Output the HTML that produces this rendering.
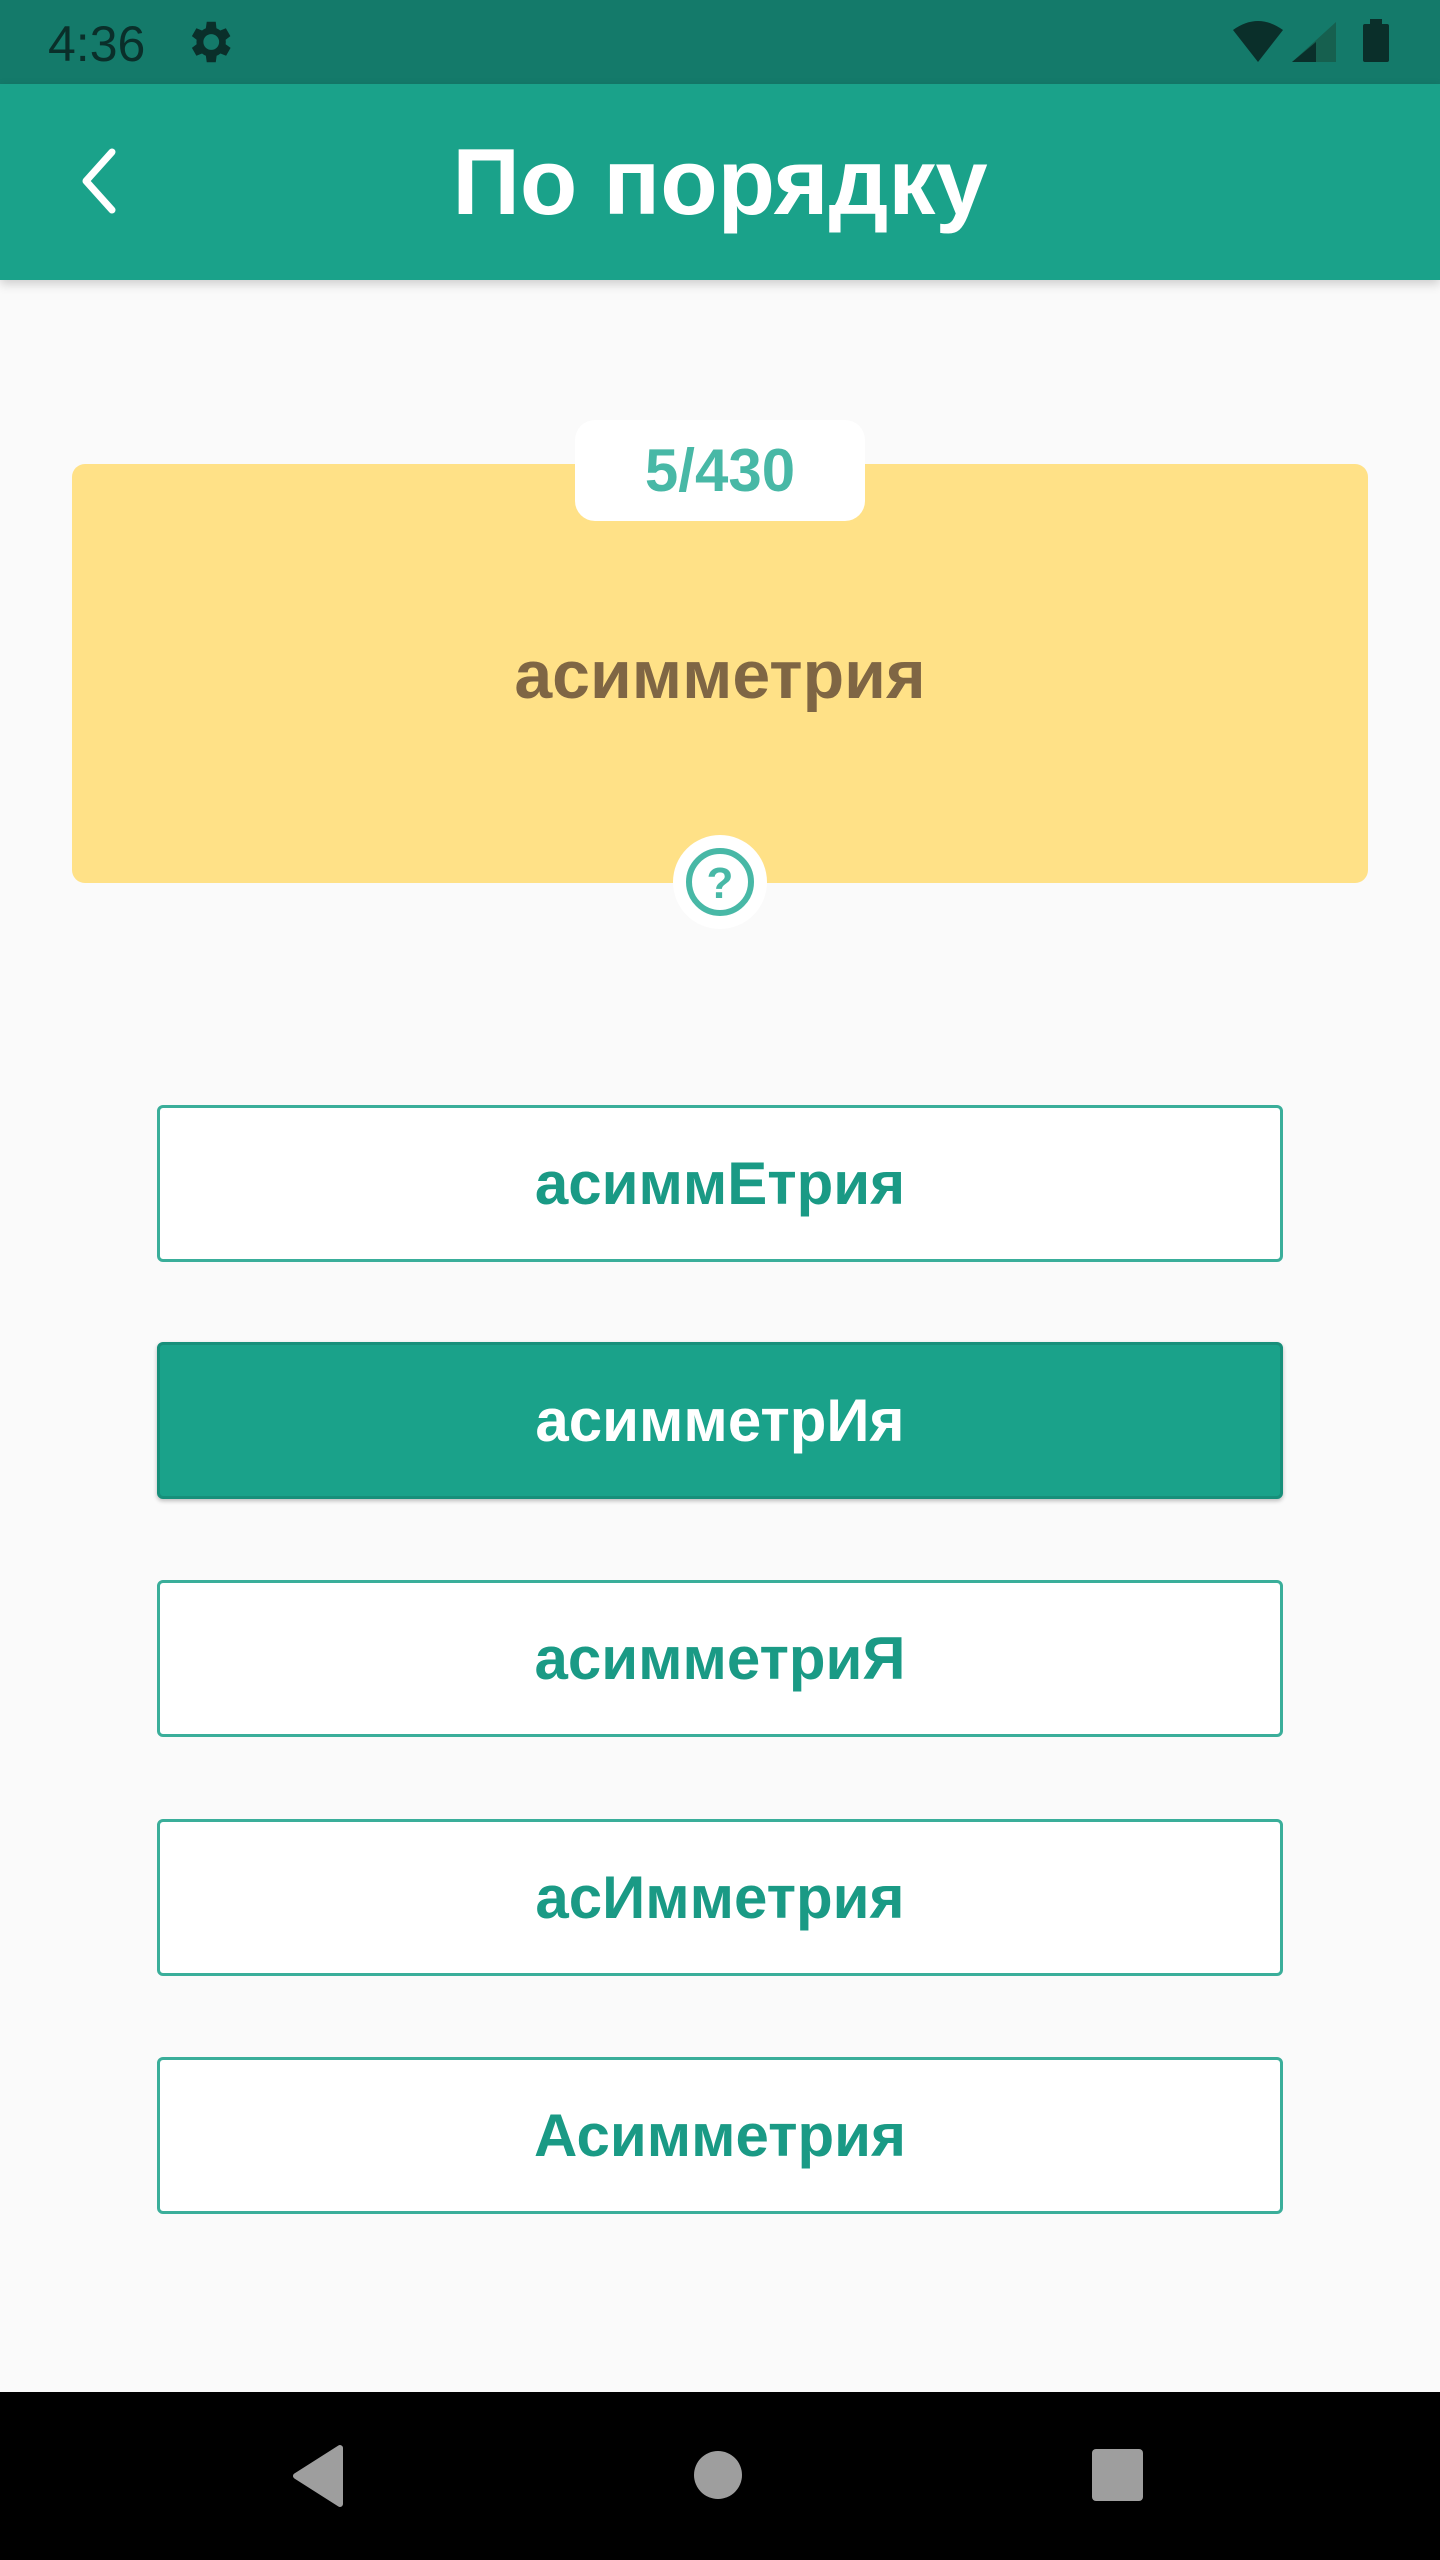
<!DOCTYPE html>
<html><head><meta charset="utf-8"><style>
*{margin:0;padding:0;box-sizing:border-box}
body{width:1440px;height:2560px;background:#fafafa;position:relative;overflow:hidden;font-family:"Liberation Sans",sans-serif}
.sb{position:absolute;left:0;top:0;width:1440px;height:84px;background:#147a6a}
.ab{position:absolute;left:0;top:84px;width:1440px;height:196px;background:#1aa28a;box-shadow:0 4px 10px rgba(0,0,0,.18)}
.title{position:absolute;left:0;width:1440px;top:84px;height:196px;line-height:196px;text-align:center;color:#fff;font-weight:bold;font-size:94px}
.card{position:absolute;left:72px;top:464px;width:1296px;height:419px;background:#ffe187;border-radius:13px}
.badge{position:absolute;left:575px;top:420px;width:290px;height:101px;background:#fff;border-radius:20px;text-align:center;line-height:101px;color:#48b8a6;font-weight:bold;font-size:60px}
.word{position:absolute;left:0;width:1440px;top:620px;text-align:center;color:#7f6644;font-weight:bold;font-size:68px;line-height:110px}
.btn{position:absolute;left:157px;width:1126px;height:157px;border:3px solid #3aae9a;border-radius:6px;background:#fff;color:#1a9a85;font-weight:bold;font-size:60px;text-align:center;line-height:151px}
.sel{background:#1aa28a;color:#fff;border-color:#178f7a;box-shadow:0 2px 4px rgba(0,0,0,.25)}
.nav{position:absolute;left:0;top:2392px;width:1440px;height:168px;background:#000}
</style></head><body>
<div class="sb"></div>
<div style="position:absolute;left:48px;top:14px;font-size:50px;color:#0a2f2a;line-height:60px">4:36</div>
<svg style="position:absolute;left:182px;top:15px" width="54" height="54" viewBox="0 0 24 24"><path fill="#0a2f2a" d="M19.4 13a7.5 7.5 0 0 0 0-2l2.1-1.6-2-3.5-2.5 1a7 7 0 0 0-1.7-1L15 3h-4l-.4 2.9a7 7 0 0 0-1.7 1l-2.5-1-2 3.5L6.5 11a7.5 7.5 0 0 0 0 2l-2.1 1.6 2 3.5 2.5-1a7 7 0 0 0 1.7 1L11 21h4l.4-2.9a7 7 0 0 0 1.7-1l2.5 1 2-3.5zM13 15.5a3.5 3.5 0 1 1 0-7 3.5 3.5 0 0 1 0 7z"/></svg>
<svg style="position:absolute;left:1230px;top:18px" width="170" height="48" viewBox="0 0 170 48">
<path d="M3 12 Q28 -6 53 12 L28 44 Z" fill="#0a2f2a"/>
<path d="M106 4 L106 44 L62 44 Z" fill="#16604f"/>
<path d="M86 24 L86 44 L62 44 Z" fill="#0a2f2a"/>
<rect x="133" y="6" width="26" height="38" rx="2" fill="#0a2f2a"/><rect x="140" y="1" width="12" height="6" fill="#0a2f2a"/>
</svg>
<div class="ab"></div>
<svg style="position:absolute;left:74px;top:146px" width="50" height="70" viewBox="0 0 50 70"><path d="M38 6 L12 35 L38 64" fill="none" stroke="#fff" stroke-width="7" stroke-linecap="round" stroke-linejoin="round"/></svg>
<div class="title">По порядку</div>
<div class="card"></div>
<div class="badge">5/430</div>
<div class="word">асимметрия</div>
<svg style="position:absolute;left:673px;top:835px" width="94" height="94" viewBox="0 0 94 94"><circle cx="47" cy="47" r="47" fill="#fff"/><circle cx="47" cy="47" r="31" fill="none" stroke="#48b8a6" stroke-width="6"/><text x="47" y="63" text-anchor="middle" font-family="Liberation Sans" font-weight="bold" font-size="44" fill="#48b8a6">?</text></svg>
<div class="btn" style="top:1105px">асиммЕтрия</div>
<div class="btn sel" style="top:1342px">асимметрИя</div>
<div class="btn" style="top:1580px">асимметриЯ</div>
<div class="btn" style="top:1819px">асИмметрия</div>
<div class="btn" style="top:2057px">Асимметрия</div>
<div class="nav"></div>
<svg style="position:absolute;left:290px;top:2444px" width="56" height="64" viewBox="0 0 56 64"><path d="M50 4 L50 60 L6 32 Z" fill="#9e9e9e" stroke="#9e9e9e" stroke-width="6" stroke-linejoin="round"/></svg>
<div style="position:absolute;left:694px;top:2451px;width:48px;height:48px;border-radius:50%;background:#9e9e9e"></div>
<div style="position:absolute;left:1092px;top:2449px;width:51px;height:52px;border-radius:4px;background:#9e9e9e"></div>
</body></html>
